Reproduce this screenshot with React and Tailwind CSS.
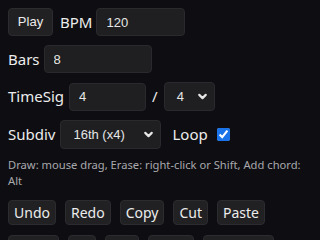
import { ChevronDown } from 'lucide-react';

const labelFont = { fontFamily: '"Noto Sans", "Open Sans", sans-serif' };

function Field({ className = '', value }) {
  return (
    <input
      readOnly
      value={value}
      className={`h-[28px] rounded-[4px] border border-[#2a2a2e] bg-[#1f1f21] px-[9px] text-[13px] text-[#e6e6e6] outline-none font-['Liberation_Sans',Arial,sans-serif] ${className}`}
    />
  );
}

function Picker({ className = '', value }) {
  return (
    <div
      className={`flex h-[29px] items-center justify-between rounded-[4px] border border-[#2a2a2e] bg-[#1f1f21] pl-[12px] pr-[5px] text-[13px] text-[#e6e6e6] font-['Liberation_Sans',Arial,sans-serif] ${className}`}
    >
      <span>{value}</span>
      <ChevronDown size={13} strokeWidth={4} className="text-[#e6e6e6]" />
    </div>
  );
}

function Btn({ children }) {
  return (
    <button className="h-[25px] rounded-[4px] border border-[#2c2c30] bg-[#212123] px-[5px] text-[14px] leading-[20px] text-[#ececec] font-['Noto_Sans',sans-serif]">
      {children}
    </button>
  );
}

export default function App() {
  return (
    <div className="h-[240px] w-[320px] overflow-hidden bg-[#0e0e12] px-2 pt-2 text-[#ececec]" style={labelFont}>
      {/* Transport */}
      <div className="flex items-center">
        <button className="h-[28px] w-[45px] rounded-[4px] border border-[#2c2c30] bg-[#212123] text-[13px] text-[#ececec] font-['Liberation_Sans',Arial,sans-serif]">
          Play
        </button>
        <span className="ml-[7px] text-[15px]">BPM</span>
        <Field value="120" className="ml-[4px] w-[89px]" />
      </div>

      <div className="mt-[9px] flex items-center">
        <span className="text-[15px]">Bars</span>
        <Field value="8" className="ml-[4px] w-[108px]" />
      </div>

      <div className="mt-[9px] flex items-center">
        <span className="text-[15px]">TimeSig</span>
        <Field value="4" className="ml-[5px] w-[77px]" />
        <span className="mx-[6px] text-[15px]">/</span>
        <Picker value="4" className="w-[51px]" />
      </div>

      <div className="mt-[9px] flex items-center">
        <span className="text-[15px]">Subdiv</span>
        <Picker value="16th (x4)" className="ml-[5px] w-[101px]" />
        <span className="ml-[11px] text-[15px]">Loop</span>
        <input type="checkbox" readOnly checked className="ml-[9px] h-[13px] w-[13px] accent-[#1a73e8]" />
      </div>

      <p className="mt-[8px] text-[11.2px] leading-[16px] text-[#a8a8ac]">
        Draw: mouse drag, Erase: right-click or Shift, Add chord: Alt
      </p>

      <div className="mt-[11px] flex gap-[9px]">
        <Btn>Undo</Btn>
        <Btn>Redo</Btn>
        <Btn>Copy</Btn>
        <Btn>Cut</Btn>
        <Btn>Paste</Btn>
      </div>
      <div className="mt-[10px] flex gap-[9px]">
        <Btn>Select</Btn>
        <Btn>All</Btn>
        <Btn>Del</Btn>
        <Btn>Clear</Btn>
        <Btn>Quantize</Btn>
      </div>
    </div>
  );
}
